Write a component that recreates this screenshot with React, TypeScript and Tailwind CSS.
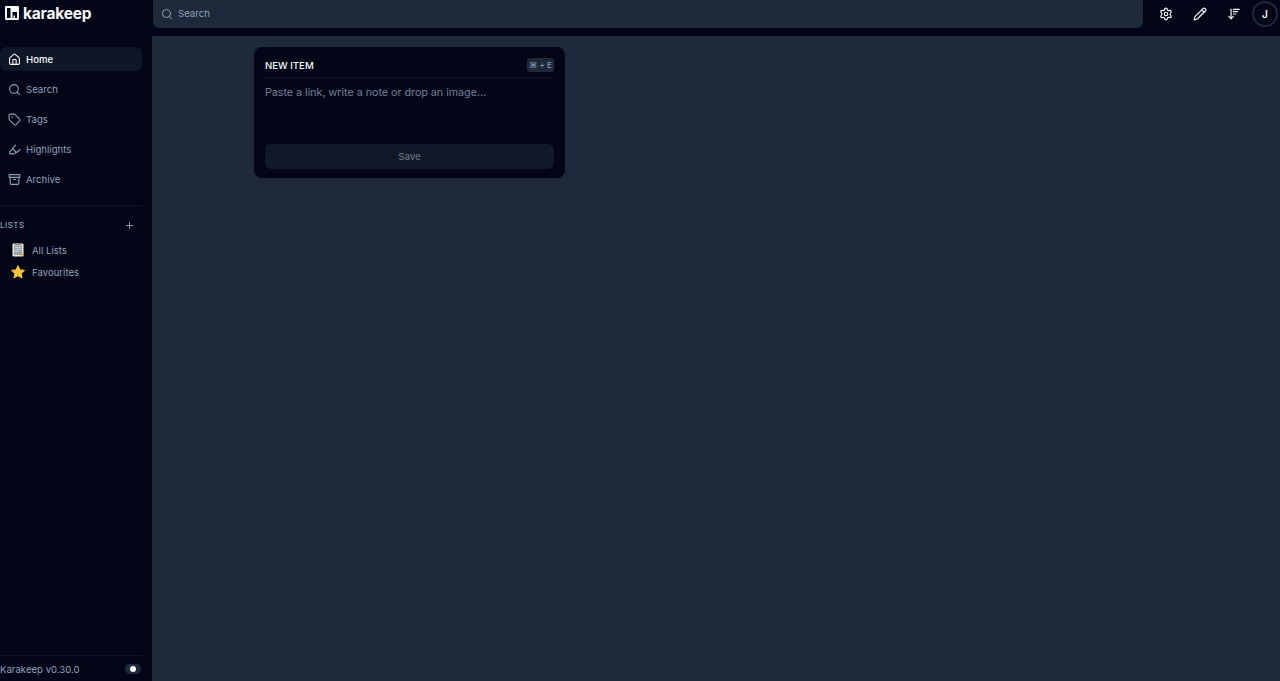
import { Archive, ArrowDownWideNarrow, Highlighter, Home, Pencil, Plus, Search, Settings, Tag } from "lucide-react";

const NAV_ITEMS = [
  { label: "Home", icon: Home, active: true },
  { label: "Search", icon: Search },
  { label: "Tags", icon: Tag },
  { label: "Highlights", icon: Highlighter },
  { label: "Archive", icon: Archive },
];

function ClipboardEmoji() {
  return (
    <svg width="14" height="14" viewBox="0 0 14 14" className="shrink-0">
      <rect x="1.5" y="0.5" width="11" height="13" rx="1" fill="#f1e6cf" />
      <rect x="3" y="2.5" width="8" height="9.5" fill="#9aa5b3" />
      <rect x="4" y="4" width="6" height="1" fill="#c9cfd8" />
      <rect x="4" y="6" width="6" height="1" fill="#c9cfd8" />
      <rect x="4" y="8" width="4" height="1" fill="#c9cfd8" />
      <rect x="3.5" y="0" width="7" height="2" fill="#7b8796" />
      <path d="M9 12.5l3.5-3.5v3.5z" fill="#e0a82e" />
    </svg>
  );
}

function StarEmoji() {
  return (
    <svg width="14" height="14" viewBox="0 0 24 24" className="shrink-0">
      <path
        d="M12 1.5l3.2 6.9 7.5.9-5.5 5.1 1.5 7.4-6.7-3.7-6.7 3.7 1.5-7.4L1.3 9.3l7.5-.9z"
        fill="#f5c33b"
        stroke="#f5c33b"
        strokeWidth="2"
        strokeLinejoin="round"
      />
    </svg>
  );
}

function Logo() {
  return (
    <div className="flex items-center gap-[4px] h-[26px]">
      <svg width="14" height="14" viewBox="0 0 14 14" className="shrink-0">
        <path fillRule="evenodd" d="M1 0h12a1 1 0 0 1 1 1v12a1 1 0 0 1-1 1H1a1 1 0 0 1-1-1V1a1 1 0 0 1 1-1zM2 2v10h3.5V2zM7.5 6v6h1V9.5h1.5V12H12V6z" fill="#f8fafc" />
      </svg>
      <span className="text-[15.5px] font-bold text-slate-50 tracking-[-0.2px] leading-none mt-[1px]">karakeep</span>
    </div>
  );
}

export default function App() {
  return (
    <div className="flex flex-col h-[681px] bg-[#020617] overflow-hidden font-['Inter',sans-serif]">
      {/* Top bar */}
      <header className="flex h-[36px] shrink-0">
        <div className="w-[153px] shrink-0 pl-[5px]">
          <Logo />
        </div>
        <div className="flex-1 flex items-start">
          <div className="flex items-center gap-[5px] w-[990px] h-[28px] bg-[#1e293b] rounded-b-md pl-[8px]">
            <Search size={12} className="text-slate-400" />
            <span className="text-[9.6px] pt-[1px] text-slate-400">Search</span>
          </div>
          <div className="flex items-center h-[28px] flex-1 pl-[16px]">
            <Settings size={14} className="text-slate-50" />
            <Pencil size={14} className="text-slate-50 ml-[20px]" />
            <ArrowDownWideNarrow size={14} className="text-slate-50 ml-[20px]" />
            <div className="ml-[11px] w-[26px] h-[26px] rounded-full border-2 border-[#1e293b] flex items-center justify-center text-[10px] font-semibold text-slate-50">
              J
            </div>
          </div>
        </div>
      </header>

      <div className="flex flex-1 min-h-0">
        {/* Sidebar */}
        <aside className="flex flex-col w-[152px] shrink-0">
          <nav className="flex flex-col gap-[6px] pt-[11px]">
            {NAV_ITEMS.map((item) => (
              <div
                key={item.label}
                className={`flex items-center gap-[5px] w-[142px] h-[24px] pl-[8px] rounded-md text-[9.6px] ${
                  item.active ? "bg-[#0f1625] text-slate-50 font-medium" : "text-slate-400"
                }`}
              >
                <item.icon size={13} />
                <span className="pt-[3px]">{item.label}</span>
              </div>
            ))}
          </nav>
          <div className="w-[142px] border-t border-[#0f172a] mt-[14px]" />
          <div className="flex items-center justify-between w-[142px] pr-[7px] mt-[13px] h-[12px]">
            <span className="text-[8px] font-medium tracking-[0.5px] text-slate-400">LISTS</span>
            <Plus size={11} className="text-slate-400" />
          </div>
          <div className="flex flex-col mt-[8px]">
            <div className="flex items-center gap-[7px] h-[22px] pl-[11px] text-[9.6px] text-slate-400">
              <ClipboardEmoji />
              <span className="pt-[3px]">All Lists</span>
            </div>
            <div className="flex items-center gap-[7px] h-[22px] pl-[11px] text-[9.6px] text-slate-400">
              <StarEmoji />
              <span className="pt-[3px]">Favourites</span>
            </div>
          </div>
          <div className="mt-auto w-[142px] border-t border-[#0f172a] h-[26px] flex items-center justify-between pr-[1px]">
            <span className="text-[9.6px] pt-[3px] text-slate-400">Karakeep v0.30.0</span>
            <div className="w-[16px] h-[10px] rounded-full bg-[#1e293b] flex items-center justify-center">
              <div className="w-[6px] h-[6px] rounded-full bg-slate-50" />
            </div>
          </div>
        </aside>

        {/* Main */}
        <main className="flex-1 bg-[#1e293b] pl-[102px] pt-[11px]">
          <div className="flex flex-col w-[311px] h-[131px] bg-[#020617] rounded-lg px-[11px]">
            <div className="flex items-center justify-between h-[31px] border-b border-[#0f172a] pt-[6px]">
              <span className="text-[9.6px] pt-[3px] font-medium text-slate-50">NEW ITEM</span>
              <span className="flex items-center justify-center w-[27px] h-[14px] bg-[#1e293b] rounded-[3px] text-[8px] text-slate-400">
                ⌘ + E
              </span>
            </div>
            <div className="pt-[7px] text-[10.7px] text-[#728199] leading-[16px]">
              Paste a link, write a note or drop an image...
            </div>
            <div className="mt-auto mb-[9px] flex items-center justify-center h-[25px] bg-[#111827] rounded-md text-[9.6px] font-medium text-[#6b7280]">
              <span className="pt-[2px]">Save</span>
            </div>
          </div>
        </main>
      </div>
    </div>
  );
}
